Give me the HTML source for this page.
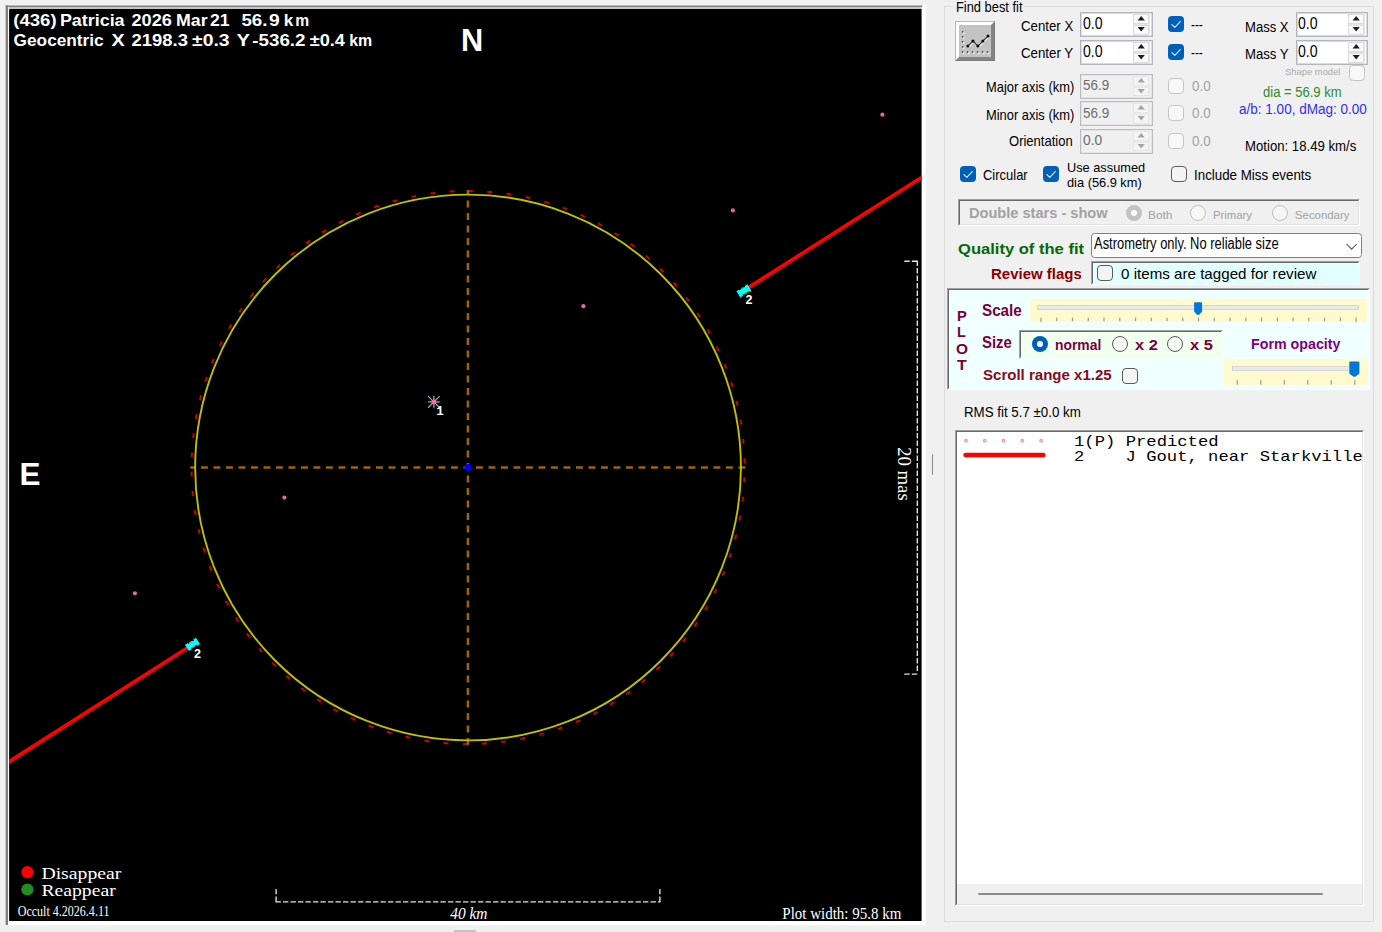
<!DOCTYPE html>
<html lang="en"><head><meta charset="utf-8"><title>Occult - Asteroid occultation plot</title>
<style>
html,body{margin:0;padding:0}
body{width:1382px;height:932px;overflow:hidden;background:#f0f0f0;position:relative;font-family:"Liberation Sans",Arial,sans-serif}
.a{position:absolute;box-sizing:border-box}
.t{position:absolute;white-space:nowrap;transform-origin:0 50%}
#plot{position:absolute;left:9px;top:9px;width:913px;height:912px;display:block}
.sunk{border:1px solid;border-color:#a0a0a0 #fff #fff #a0a0a0}
.sunk>i{position:absolute;left:0;top:0;right:0;bottom:0;border:1px solid;border-color:#696969 #e3e3e3 #e3e3e3 #696969}
.nud{background:#fff;border:1px solid #b3b6bd;box-shadow:inset 0 0 0 1px #d9dbe0}
.nud.dis{background:#f0f0f0;border-color:#b9bcc2;box-shadow:inset 0 0 0 1px #e3e4e6}
.nud .sp{position:absolute;right:2px;top:0;bottom:2px;width:17px;background:#e6e6e6}
.nud .sp b{position:absolute;left:0;width:16px;background:#f9f9f9;border:1px solid #dcdcdc;box-sizing:border-box}
.nud.dis .sp{background:#eeeeee}
.nud.dis .sp b{background:#f4f4f4;border-color:#e6e6e6}
.cb{border-radius:4px}
.cb.on{background:#005fb8}
.cb.off{background:#f4f4f4;border:1px solid #5c5c5c}
.cb.dis{background:#f8f8f8;border:1px solid #c6c6c6}
.rb{border-radius:50%}
.rb.off{background:#f6f6f6;border:1px solid #5a5a5a}
.rb.dis{background:#f7f7f7;border:1px solid #c0c0c0}
svg{position:absolute;overflow:visible}
</style></head><body>

<svg class="a" style="left:0;top:0" width="932" height="932" viewBox="0 0 932 932">
<rect x="5" y="5" width="920.5" height="920.1" fill="#fff"/>
<rect x="5" y="5" width="917.4" height="1" fill="#b9b9b9"/>
<rect x="5" y="6" width="917.4" height="1" fill="#808080"/>
<rect x="5" y="7" width="916.6" height="2" fill="#c4c4c4"/>
<rect x="5" y="5" width="1" height="920" fill="#c6c6c6"/>
<rect x="6" y="5.5" width="2" height="919.5" fill="#7e7e7e"/>
<rect x="8" y="7.6" width="1.2" height="917" fill="#fbfbfb"/>
<rect x="9.1" y="9" width="912.5" height="912" fill="#000"/>
<defs><clipPath id="pc"><rect x="9.1" y="9" width="912.5" height="912"/></clipPath></defs>
<g clip-path="url(#pc)">
<circle cx="468.05" cy="467.5" r="276.5" fill="none" stroke="#cc0000" stroke-width="2" stroke-dasharray="4.9 14.4033" stroke-dashoffset="0" transform="rotate(-90 468.05 467.5)"/>
<line x1="190.2" y1="467.4" x2="745.5" y2="467.4" stroke="#9c6604" stroke-width="2.5" stroke-dasharray="6.9 5.6" stroke-dashoffset="1.7"/>
<line x1="467.9" y1="190" x2="467.9" y2="744.8" stroke="#9c6604" stroke-width="2.5" stroke-dasharray="6.9 5.6" stroke-dashoffset="2"/>
<circle cx="468.05" cy="467.5" r="272.9" fill="none" stroke="#bebe00" stroke-width="1.9"/>
<circle cx="467.95" cy="467.5" r="3.6" fill="#0000ff"/>
<circle cx="882.40" cy="114.70" r="2.1" fill="#e862b0"/>
<circle cx="732.90" cy="210.43" r="2.1" fill="#e862b0"/>
<circle cx="583.40" cy="306.16" r="2.1" fill="#e862b0"/>
<line x1="428.10" y1="401.89" x2="439.70" y2="401.89" stroke="#a4a4b0" stroke-width="1.3"/>
<line x1="428.10" y1="396.09" x2="439.70" y2="407.69" stroke="#a4a4b0" stroke-width="1.3"/>
<line x1="433.90" y1="396.09" x2="433.90" y2="407.69" stroke="#a4a4b0" stroke-width="1.3"/>
<line x1="439.70" y1="396.09" x2="428.10" y2="407.69" stroke="#a4a4b0" stroke-width="1.3"/>
<circle cx="433.90" cy="401.89" r="2.35" fill="#ff69b4"/>
<circle cx="284.40" cy="497.62" r="2.1" fill="#e862b0"/>
<circle cx="134.90" cy="593.35" r="2.1" fill="#e862b0"/>
<line x1="748" y1="287.9" x2="924" y2="175.85" stroke="#ff0000" stroke-width="3.7"/>
<line x1="6" y1="763.7" x2="188.1" y2="647.5" stroke="#ff0000" stroke-width="3.7"/>
<circle cx="743.90" cy="290.80" r="3.7" fill="#00c000"/>
<line x1="739.77" y1="293.43" x2="748.03" y2="288.17" stroke="#00ffff" stroke-width="4.9"/>
<line x1="737.78" y1="290.31" x2="741.75" y2="296.55" stroke="#00ffff" stroke-width="3.2"/>
<line x1="746.05" y1="285.05" x2="750.02" y2="291.29" stroke="#00ffff" stroke-width="3.2"/>
<circle cx="192.45" cy="644.35" r="3.7" fill="#e05a3c"/>
<line x1="188.32" y1="646.98" x2="196.58" y2="641.72" stroke="#00ffff" stroke-width="4.9"/>
<line x1="186.33" y1="643.86" x2="190.30" y2="650.10" stroke="#00ffff" stroke-width="3.2"/>
<line x1="194.60" y1="638.60" x2="198.57" y2="644.84" stroke="#00ffff" stroke-width="3.2"/>
<line x1="276.1" y1="888.9" x2="276.1" y2="902.5" stroke="#e4e4e4" stroke-width="1.35" stroke-dasharray="5.4 2.1"/>
<line x1="659.9" y1="888.9" x2="659.9" y2="902.5" stroke="#e4e4e4" stroke-width="1.35" stroke-dasharray="5.4 2.1"/>
<line x1="275.5" y1="901.9" x2="660.5" y2="901.9" stroke="#e4e4e4" stroke-width="1.35" stroke-dasharray="5.4 2.1"/>
<line x1="904.3" y1="261.2" x2="917.9" y2="261.2" stroke="#e4e4e4" stroke-width="1.35" stroke-dasharray="5.4 2.1"/>
<line x1="917.3" y1="260.6" x2="917.3" y2="672" stroke="#e4e4e4" stroke-width="1.35" stroke-dasharray="5.4 2.1"/>
<line x1="904.3" y1="674.1" x2="918" y2="674.1" stroke="#e4e4e4" stroke-width="1.35" stroke-dasharray="5.4 2.1"/>
<circle cx="27.4" cy="872.1" r="6.1" fill="#ff0000"/>
<circle cx="27.4" cy="889.5" r="6.1" fill="#228b22"/>
</g>
<text x="13.3" y="26" font-family="Liberation Sans, Arial, sans-serif" font-size="16.3" fill="#fff" font-weight="bold" textLength="43.3" lengthAdjust="spacingAndGlyphs" >(436)</text>
<text x="59.9" y="26" font-family="Liberation Sans, Arial, sans-serif" font-size="16.3" fill="#fff" font-weight="bold" textLength="64.7" lengthAdjust="spacingAndGlyphs" >Patricia</text>
<text x="131.5" y="26" font-family="Liberation Sans, Arial, sans-serif" font-size="16.3" fill="#fff" font-weight="bold" textLength="40.4" lengthAdjust="spacingAndGlyphs" >2026</text>
<text x="176.0" y="26" font-family="Liberation Sans, Arial, sans-serif" font-size="16.3" fill="#fff" font-weight="bold" textLength="31.6" lengthAdjust="spacingAndGlyphs" >Mar</text>
<text x="210.0" y="26" font-family="Liberation Sans, Arial, sans-serif" font-size="16.3" fill="#fff" font-weight="bold" textLength="19.6" lengthAdjust="spacingAndGlyphs" >21</text>
<text x="241.4" y="26" font-family="Liberation Sans, Arial, sans-serif" font-size="16.3" fill="#fff" font-weight="bold" textLength="26.0" lengthAdjust="spacingAndGlyphs" >56.</text>
<text x="269.09999999999997" y="26" font-family="Liberation Sans, Arial, sans-serif" font-size="16.3" fill="#fff" font-weight="bold" textLength="10.7" lengthAdjust="spacingAndGlyphs" >9</text>
<text x="283.79999999999995" y="26" font-family="Liberation Sans, Arial, sans-serif" font-size="16.3" fill="#fff" font-weight="bold" textLength="9.6" lengthAdjust="spacingAndGlyphs" >k</text>
<text x="295.2" y="26" font-family="Liberation Sans, Arial, sans-serif" font-size="16.3" fill="#fff" font-weight="bold" textLength="13.9" lengthAdjust="spacingAndGlyphs" >m</text>
<text x="13.6" y="45.5" font-family="Liberation Sans, Arial, sans-serif" font-size="16.3" fill="#fff" font-weight="bold" textLength="90.1" lengthAdjust="spacingAndGlyphs" >Geocentric</text>
<text x="111.5" y="45.5" font-family="Liberation Sans, Arial, sans-serif" font-size="16.3" fill="#fff" font-weight="bold" textLength="13.2" lengthAdjust="spacingAndGlyphs" >X</text>
<text x="131.5" y="45.5" font-family="Liberation Sans, Arial, sans-serif" font-size="16.3" fill="#fff" font-weight="bold" textLength="56.4" lengthAdjust="spacingAndGlyphs" >2198.3</text>
<text x="192.1" y="45.5" font-family="Liberation Sans, Arial, sans-serif" font-size="16.3" fill="#fff" font-weight="bold" textLength="37.5" lengthAdjust="spacingAndGlyphs" >±0.3</text>
<text x="236.6" y="45.5" font-family="Liberation Sans, Arial, sans-serif" font-size="16.3" fill="#fff" font-weight="bold" textLength="13.5" lengthAdjust="spacingAndGlyphs" >Y</text>
<text x="252.3" y="45.5" font-family="Liberation Sans, Arial, sans-serif" font-size="16.3" fill="#fff" font-weight="bold" textLength="53.2" lengthAdjust="spacingAndGlyphs" >-536.2</text>
<text x="309.7" y="45.5" font-family="Liberation Sans, Arial, sans-serif" font-size="16.3" fill="#fff" font-weight="bold" textLength="35.3" lengthAdjust="spacingAndGlyphs" >±0.4</text>
<text x="349.2" y="45.5" font-family="Liberation Sans, Arial, sans-serif" font-size="16.3" fill="#fff" font-weight="bold" textLength="23.0" lengthAdjust="spacingAndGlyphs" >km</text>
<text x="461" y="51" font-family="Liberation Sans, Arial, sans-serif" font-size="30.5" fill="#fff" font-weight="bold" textLength="22.2" lengthAdjust="spacingAndGlyphs" >N</text>
<text x="19.4" y="485.2" font-family="Liberation Sans, Arial, sans-serif" font-size="30.6" fill="#fff" font-weight="bold" textLength="21" lengthAdjust="spacingAndGlyphs" >E</text>
<text x="436.3" y="415" font-family="Liberation Mono, Courier New, monospace" font-size="12.5" fill="#fff" font-weight="bold" >1</text>
<text x="745.5" y="303.9" font-family="Liberation Sans, Arial, sans-serif" font-size="12.5" fill="#fff" font-weight="bold" >2</text>
<text x="193.9" y="657.9" font-family="Liberation Sans, Arial, sans-serif" font-size="12.5" fill="#fff" font-weight="bold" >2</text>
<text x="41.4" y="878.8" font-family="Liberation Serif, Times New Roman, serif" font-size="17.3" fill="#fff" textLength="80" lengthAdjust="spacingAndGlyphs" >Disappear</text>
<text x="41.4" y="895.8" font-family="Liberation Serif, Times New Roman, serif" font-size="17.3" fill="#fff" textLength="74.3" lengthAdjust="spacingAndGlyphs" >Reappear</text>
<text x="17.7" y="916.3" font-family="Liberation Serif, Times New Roman, serif" font-size="13.7" fill="#fff" textLength="91.8" lengthAdjust="spacingAndGlyphs" >Occult 4.2026.4.11</text>
<text x="450.2" y="918.7" font-family="Liberation Serif, Times New Roman, serif" font-size="17" fill="#fff" font-style="italic" textLength="37.3" lengthAdjust="spacingAndGlyphs" >40 km</text>
<text x="782.3" y="918.7" font-family="Liberation Serif, Times New Roman, serif" font-size="17.2" fill="#fff" textLength="119" lengthAdjust="spacingAndGlyphs" >Plot width: 95.8 km</text>
<text x="447.2" y="-897.6" font-family="Liberation Serif, Times New Roman, serif" font-size="18.2" fill="#fff" textLength="53.5" lengthAdjust="spacingAndGlyphs" transform="rotate(90)">20 mas</text>
</svg>
<div class="a" style="left:931.5px;top:453.7px;width:1.6px;height:21.2px;background:#8a8a8a;border-radius:1px"></div>
<div class="a" style="left:454px;top:930px;width:22px;height:2px;background:#c3c3c3"></div>
<div class="a " style="left:944px;top:6px;width:430px;height:916px;border:1px solid #dcdcdc;"></div>
<div class="a " style="left:953px;top:0px;width:71px;height:14px;background:#f0f0f0;"></div>
<div class="a" style="left:955px;top:21px;width:40px;height:40px;background:#c3c3c3;border:1px solid;border-color:#b8b8b8 #7d7d7d #7d7d7d #b8b8b8"><div class="a" style="left:0;top:0;width:38px;height:38px;border-style:solid;border-width:3px 3px 3px 3px;border-color:#fff #848484 #848484 #fff"></div><svg style="left:0;top:0" width="40" height="40" viewBox="0 0 40 40"><rect x="6.9" y="10.3" width="1.5" height="1.5" fill="#fff"/><rect x="5.9" y="9.2" width="1.4" height="1.4" fill="#333"/><rect x="6.9" y="15.2" width="1.5" height="1.5" fill="#fff"/><rect x="5.9" y="14.1" width="1.4" height="1.4" fill="#333"/><rect x="6.9" y="20.2" width="1.5" height="1.5" fill="#fff"/><rect x="5.9" y="19.1" width="1.4" height="1.4" fill="#333"/><rect x="6.9" y="25.3" width="1.5" height="1.5" fill="#fff"/><rect x="5.9" y="24.2" width="1.4" height="1.4" fill="#333"/><rect x="6.9" y="30.4" width="1.5" height="1.5" fill="#fff"/><rect x="5.9" y="29.3" width="1.4" height="1.4" fill="#333"/><rect x="11.9" y="30.4" width="1.5" height="1.5" fill="#fff"/><rect x="10.8" y="29.3" width="1.4" height="1.4" fill="#333"/><rect x="16.9" y="30.4" width="1.5" height="1.5" fill="#fff"/><rect x="15.8" y="29.3" width="1.4" height="1.4" fill="#333"/><rect x="22.0" y="30.4" width="1.5" height="1.5" fill="#fff"/><rect x="20.9" y="29.3" width="1.4" height="1.4" fill="#333"/><rect x="27.0" y="30.4" width="1.5" height="1.5" fill="#fff"/><rect x="25.9" y="29.3" width="1.4" height="1.4" fill="#333"/><rect x="31.9" y="30.4" width="1.5" height="1.5" fill="#fff"/><rect x="30.8" y="29.3" width="1.4" height="1.4" fill="#333"/><polyline points="12.4,25.1 17.5,20.1 22.4,25.1 27.4,20.1 32.5,15.1" fill="none" stroke="#fff" stroke-width="1.3"/><polyline points="11.9,24.1 17,19.1 21.9,24.1 26.9,19.1 32,14.1" fill="none" stroke="#333" stroke-width="1.3"/><circle cx="11.9" cy="24.1" r="1.5" fill="#000"/><circle cx="17.0" cy="19.1" r="1.5" fill="#000"/><circle cx="21.9" cy="24.1" r="1.5" fill="#000"/><circle cx="26.9" cy="19.1" r="1.5" fill="#000"/><circle cx="32.0" cy="14.1" r="1.5" fill="#000"/></svg></div>
<div class="a nud" style="left:1080px;top:12.3px;width:72.5px;height:25px;"><div class="sp"><b style="top:1px;height:10px"></b><b style="top:12px;height:9.5px"></b></div><svg style="left:55.5px;top:2.2px" width="10" height="18" viewBox="0 0 10 18"><path d="M0.6 5.4L4.2 1 7.8 5.4Z" fill="#1c1c1c"/><path d="M0.6 12L4.2 16.4 7.8 12Z" fill="#1c1c1c"/></svg></div>
<div class="a nud" style="left:1080px;top:40px;width:72.5px;height:25px;"><div class="sp"><b style="top:1px;height:10px"></b><b style="top:12px;height:9.5px"></b></div><svg style="left:55.5px;top:2.2px" width="10" height="18" viewBox="0 0 10 18"><path d="M0.6 5.4L4.2 1 7.8 5.4Z" fill="#1c1c1c"/><path d="M0.6 12L4.2 16.4 7.8 12Z" fill="#1c1c1c"/></svg></div>
<div class="a nud" style="left:1295.6px;top:12.3px;width:72.5px;height:25px;"><div class="sp"><b style="top:1px;height:10px"></b><b style="top:12px;height:9.5px"></b></div><svg style="left:55.5px;top:2.2px" width="10" height="18" viewBox="0 0 10 18"><path d="M0.6 5.4L4.2 1 7.8 5.4Z" fill="#1c1c1c"/><path d="M0.6 12L4.2 16.4 7.8 12Z" fill="#1c1c1c"/></svg></div>
<div class="a nud" style="left:1295.6px;top:40px;width:72.5px;height:25px;"><div class="sp"><b style="top:1px;height:10px"></b><b style="top:12px;height:9.5px"></b></div><svg style="left:55.5px;top:2.2px" width="10" height="18" viewBox="0 0 10 18"><path d="M0.6 5.4L4.2 1 7.8 5.4Z" fill="#1c1c1c"/><path d="M0.6 12L4.2 16.4 7.8 12Z" fill="#1c1c1c"/></svg></div>
<div class="a nud dis" style="left:1080px;top:73.8px;width:72.5px;height:25px;"><div class="sp"><b style="top:1px;height:10px"></b><b style="top:12px;height:9.5px"></b></div><svg style="left:55.5px;top:2.2px" width="10" height="18" viewBox="0 0 10 18"><path d="M0.6 5.4L4.2 1 7.8 5.4Z" fill="#a3a3a3"/><path d="M0.6 12L4.2 16.4 7.8 12Z" fill="#a3a3a3"/></svg></div>
<div class="a nud dis" style="left:1080px;top:101.3px;width:72.5px;height:25px;"><div class="sp"><b style="top:1px;height:10px"></b><b style="top:12px;height:9.5px"></b></div><svg style="left:55.5px;top:2.2px" width="10" height="18" viewBox="0 0 10 18"><path d="M0.6 5.4L4.2 1 7.8 5.4Z" fill="#a3a3a3"/><path d="M0.6 12L4.2 16.4 7.8 12Z" fill="#a3a3a3"/></svg></div>
<div class="a nud dis" style="left:1080px;top:128.5px;width:72.5px;height:25px;"><div class="sp"><b style="top:1px;height:10px"></b><b style="top:12px;height:9.5px"></b></div><svg style="left:55.5px;top:2.2px" width="10" height="18" viewBox="0 0 10 18"><path d="M0.6 5.4L4.2 1 7.8 5.4Z" fill="#a3a3a3"/><path d="M0.6 12L4.2 16.4 7.8 12Z" fill="#a3a3a3"/></svg></div>
<div class="a cb on" style="left:1168px;top:16.3px;width:16px;height:16px;"><svg style="left:0;top:0" width="16" height="16" viewBox="0 0 16 16"><path d="M3.9 8.6L6.8 11.4 12.3 5.6" fill="none" stroke="#fff" stroke-opacity="0.88" stroke-width="1.15" stroke-linecap="round" stroke-linejoin="round"/></svg></div>
<div class="a cb on" style="left:1168px;top:43.7px;width:16px;height:16px;"><svg style="left:0;top:0" width="16" height="16" viewBox="0 0 16 16"><path d="M3.9 8.6L6.8 11.4 12.3 5.6" fill="none" stroke="#fff" stroke-opacity="0.88" stroke-width="1.15" stroke-linecap="round" stroke-linejoin="round"/></svg></div>
<div class="a cb dis" style="left:1168px;top:77.7px;width:16px;height:16px;"></div>
<div class="a cb dis" style="left:1168px;top:105px;width:16px;height:16px;"></div>
<div class="a cb dis" style="left:1168px;top:132.5px;width:16px;height:16px;"></div>
<div class="a cb dis" style="left:1348.8px;top:65px;width:16px;height:16px;"></div>
<div class="a cb on" style="left:960.2px;top:166.3px;width:16px;height:16px;"><svg style="left:0;top:0" width="16" height="16" viewBox="0 0 16 16"><path d="M3.9 8.6L6.8 11.4 12.3 5.6" fill="none" stroke="#fff" stroke-opacity="0.88" stroke-width="1.15" stroke-linecap="round" stroke-linejoin="round"/></svg></div>
<div class="a cb on" style="left:1043px;top:166.3px;width:16px;height:16px;"><svg style="left:0;top:0" width="16" height="16" viewBox="0 0 16 16"><path d="M3.9 8.6L6.8 11.4 12.3 5.6" fill="none" stroke="#fff" stroke-opacity="0.88" stroke-width="1.15" stroke-linecap="round" stroke-linejoin="round"/></svg></div>
<div class="a cb off" style="left:1170.5px;top:166.3px;width:16px;height:16px;"></div>
<div class="a sunk" style="left:958px;top:199px;width:402px;height:27px;"><i></i></div>
<div class="a rb" style="left:1125.6px;top:205.3px;width:16px;height:16px;background:#c3c3c3;"><div class="a" style="left:5px;top:5px;width:6px;height:6px;border-radius:50%;background:#fff"></div></div>
<div class="a rb dis" style="left:1190.3px;top:205.3px;width:16px;height:16px;"></div>
<div class="a rb dis" style="left:1271.6px;top:205.3px;width:16px;height:16px;"></div>
<div class="a " style="left:1090.5px;top:233px;width:271px;height:25.3px;background:#fff;border:1px solid #7f7f7f;border-radius:3.5px;"><svg style="left:253px;top:8px" width="14" height="10" viewBox="0 0 14 10"><path d="M1.5 2L6.6 7.2 11.7 2" fill="none" stroke="#505050" stroke-width="1.05"/></svg></div>
<div class="a sunk" style="left:1091px;top:260.5px;width:269px;height:24px;background:#e0ffff;border-color:#a0a0a0 #f4ffff #f4ffff #a0a0a0"><i style="border-color:#696969 #e0ffff #e0ffff #696969"></i></div>
<div class="a cb off" style="left:1096.5px;top:264.8px;width:16px;height:16px;"></div>
<div class="a sunk" style="left:947px;top:288px;width:423px;height:102px;background:#f0ffff;"><i style="border-color:#696969 #f0ffff #f0ffff #696969"></i></div>
<div class="a " style="left:1030.3px;top:299px;width:336.7px;height:23.3px;background:#fffacd;"></div>
<div class="a " style="left:1037px;top:305px;width:322px;height:5.3px;background:#e7eaea;border:1px solid #d6d6d6;"></div>
<div class="a sunk" style="left:1019px;top:330px;width:204px;height:28.6px;background:#f0fff0;border-color:#a0a0a0 #f8fff8 #f8fff8 #a0a0a0"><i style="border-color:#696969 #f0fff0 #f0fff0 #696969"></i></div>
<div class="a rb" style="left:1031.9px;top:336.3px;width:16px;height:16px;background:#005fb8;"><div class="a" style="left:4.8px;top:4.8px;width:6.4px;height:6.4px;border-radius:50%;background:#fff"></div></div>
<div class="a rb off" style="left:1111.6px;top:336.3px;width:16px;height:16px;"></div>
<div class="a rb off" style="left:1166.8px;top:336.3px;width:16px;height:16px;"></div>
<div class="a cb off" style="left:1122px;top:367.5px;width:16px;height:16px;"></div>
<div class="a " style="left:1224.4px;top:358.9px;width:143.5px;height:26px;background:#fffacd;"></div>
<div class="a " style="left:1232px;top:366.3px;width:127.3px;height:5px;background:#e7eaea;border:1px solid #d6d6d6;"></div>
<svg class="a" style="left:0;top:0" width="1382" height="400" viewBox="0 0 1382 400"><rect x="1040.40" y="317.6" width="1.2" height="4.6" fill="#9a9a9a"/><rect x="1056.16" y="317.6" width="1.2" height="3.6" fill="#9a9a9a"/><rect x="1071.91" y="317.6" width="1.2" height="3.6" fill="#9a9a9a"/><rect x="1087.67" y="317.6" width="1.2" height="3.6" fill="#9a9a9a"/><rect x="1103.42" y="317.6" width="1.2" height="3.6" fill="#9a9a9a"/><rect x="1119.18" y="317.6" width="1.2" height="3.6" fill="#9a9a9a"/><rect x="1134.93" y="317.6" width="1.2" height="3.6" fill="#9a9a9a"/><rect x="1150.69" y="317.6" width="1.2" height="3.6" fill="#9a9a9a"/><rect x="1166.44" y="317.6" width="1.2" height="3.6" fill="#9a9a9a"/><rect x="1182.20" y="317.6" width="1.2" height="3.6" fill="#9a9a9a"/><rect x="1197.95" y="317.6" width="1.2" height="3.6" fill="#9a9a9a"/><rect x="1213.71" y="317.6" width="1.2" height="3.6" fill="#9a9a9a"/><rect x="1229.46" y="317.6" width="1.2" height="3.6" fill="#9a9a9a"/><rect x="1245.22" y="317.6" width="1.2" height="3.6" fill="#9a9a9a"/><rect x="1260.97" y="317.6" width="1.2" height="3.6" fill="#9a9a9a"/><rect x="1276.73" y="317.6" width="1.2" height="3.6" fill="#9a9a9a"/><rect x="1292.48" y="317.6" width="1.2" height="3.6" fill="#9a9a9a"/><rect x="1308.24" y="317.6" width="1.2" height="3.6" fill="#9a9a9a"/><rect x="1323.99" y="317.6" width="1.2" height="3.6" fill="#9a9a9a"/><rect x="1339.75" y="317.6" width="1.2" height="3.6" fill="#9a9a9a"/><rect x="1355.50" y="317.6" width="1.2" height="4.6" fill="#9a9a9a"/><path d="M1194.1 303.2Q1194.1 302.3 1195 302.3H1201.2Q1202.1 302.3 1202.1 303.2V310.9Q1202.1 311.9 1201.3 312.6L1199 314.7Q1198.1 315.3 1197.2 314.7L1194.9 312.6Q1194.1 311.9 1194.1 310.9Z" fill="#0078d7"/><rect x="1236.70" y="380.2" width="1.2" height="4.4" fill="#9a9a9a"/><rect x="1260.20" y="380.2" width="1.2" height="4.4" fill="#9a9a9a"/><rect x="1283.70" y="380.2" width="1.2" height="4.4" fill="#9a9a9a"/><rect x="1307.20" y="380.2" width="1.2" height="4.4" fill="#9a9a9a"/><rect x="1330.70" y="380.2" width="1.2" height="4.4" fill="#9a9a9a"/><rect x="1354.20" y="380.2" width="1.2" height="4.4" fill="#9a9a9a"/><path d="M1349.3 362.4Q1349.3 361.4 1350.3 361.4H1358.4Q1359.4 361.4 1359.4 362.4V372.4Q1359.4 373.7 1358.3 374.6L1355.6 376.5Q1354.35 377.2 1353.1 376.5L1350.4 374.6Q1349.3 373.7 1349.3 372.4Z" fill="#0078d7"/></svg>
<div class="a sunk" style="left:955px;top:429.5px;width:409px;height:476.5px;background:#fff;"><i></i><div class="a" style="left:1px;right:1px;bottom:1px;height:20px;background:#f0f0f0"></div><div class="a" style="left:22px;bottom:10px;width:345px;height:2.2px;background:#8b8b8b;border-radius:1px"></div></div>
<svg class="a" style="left:0;top:430px" width="1382" height="40" viewBox="0 430 1382 40"><circle cx="966" cy="440.7" r="1.9" fill="#ff8ac6"/><circle cx="966" cy="440.7" r="0.7" fill="#ffd0e8"/><circle cx="984.8" cy="440.7" r="1.9" fill="#ff8ac6"/><circle cx="984.8" cy="440.7" r="0.7" fill="#ffd0e8"/><circle cx="1003.5" cy="440.7" r="1.9" fill="#ff8ac6"/><circle cx="1003.5" cy="440.7" r="0.7" fill="#ffd0e8"/><circle cx="1022.3" cy="440.7" r="1.9" fill="#ff8ac6"/><circle cx="1022.3" cy="440.7" r="0.7" fill="#ffd0e8"/><circle cx="1041.1" cy="440.7" r="1.9" fill="#ff8ac6"/><circle cx="1041.1" cy="440.7" r="0.7" fill="#ffd0e8"/><line x1="965.5" y1="455" x2="1043.3" y2="455" stroke="#ff0000" stroke-width="4.5" stroke-linecap="round"/></svg>
<span class="t" style="left:955.70px;top:0.15px;font-size:14px;line-height:14px;color:#000;transform:scaleX(0.9188);">Find best fit</span>
<span class="t" style="left:1021.20px;top:18.80px;font-size:14.3px;line-height:14.3px;color:#000;transform:scaleX(0.9252);">Center X</span>
<span class="t" style="left:1021.20px;top:46.20px;font-size:14.3px;line-height:14.3px;color:#000;transform:scaleX(0.9293);">Center Y</span>
<span class="t" style="left:985.70px;top:80.40px;font-size:14.3px;line-height:14.3px;color:#000;transform:scaleX(0.9027);">Major axis (km)</span>
<span class="t" style="left:985.70px;top:108.10px;font-size:14.3px;line-height:14.3px;color:#000;transform:scaleX(0.9027);">Minor axis (km)</span>
<span class="t" style="left:1008.80px;top:134.30px;font-size:14.3px;line-height:14.3px;color:#000;transform:scaleX(0.9108);">Orientation</span>
<span class="t" style="left:1191.20px;top:18.15px;font-size:14px;line-height:14px;color:#000;transform:scaleX(0.8429);">---</span>
<span class="t" style="left:1191.20px;top:45.55px;font-size:14px;line-height:14px;color:#000;transform:scaleX(0.8429);">---</span>
<span class="t" style="left:1244.80px;top:19.75px;font-size:14px;line-height:14px;color:#000;transform:scaleX(0.9339);">Mass X</span>
<span class="t" style="left:1244.80px;top:47.15px;font-size:14px;line-height:14px;color:#000;transform:scaleX(0.9389);">Mass Y</span>
<span class="t" style="left:1082.60px;top:15.00px;font-size:16.3px;line-height:16.3px;color:#000;transform:scaleX(0.8657);">0.0</span>
<span class="t" style="left:1082.60px;top:42.60px;font-size:16.3px;line-height:16.3px;color:#000;transform:scaleX(0.8657);">0.0</span>
<span class="t" style="left:1297.60px;top:15.00px;font-size:16.3px;line-height:16.3px;color:#000;transform:scaleX(0.8657);">0.0</span>
<span class="t" style="left:1297.60px;top:42.60px;font-size:16.3px;line-height:16.3px;color:#000;transform:scaleX(0.8657);">0.0</span>
<span class="t" style="left:1082.60px;top:77.25px;font-size:15.3px;line-height:15.3px;color:#6d6d6d;transform:scaleX(0.8797);">56.9</span>
<span class="t" style="left:1082.60px;top:104.75px;font-size:15.3px;line-height:15.3px;color:#6d6d6d;transform:scaleX(0.8797);">56.9</span>
<span class="t" style="left:1082.60px;top:132.15px;font-size:15.3px;line-height:15.3px;color:#6d6d6d;transform:scaleX(0.9029);">0.0</span>
<span class="t" style="left:1191.70px;top:78.94px;font-size:14.6px;line-height:14.6px;color:#a2a2a2;transform:scaleX(0.9164);">0.0</span>
<span class="t" style="left:1191.70px;top:106.44px;font-size:14.6px;line-height:14.6px;color:#a2a2a2;transform:scaleX(0.9164);">0.0</span>
<span class="t" style="left:1191.70px;top:133.84px;font-size:14.6px;line-height:14.6px;color:#a2a2a2;transform:scaleX(0.9164);">0.0</span>
<span class="t" style="left:1285.40px;top:67.00px;font-size:9.8px;line-height:9.8px;color:#ababab;transform:scaleX(0.9596);">Shape model</span>
<span class="t" style="left:1263.10px;top:84.55px;font-size:14px;line-height:14px;color:#2e8b2e;transform:scaleX(0.9309);">dia = 56.9 km</span>
<span class="t" style="left:1239.30px;top:102.15px;font-size:14px;line-height:14px;color:#3030f0;transform:scaleX(0.9665);">a/b: 1.00, dMag: 0.00</span>
<span class="t" style="left:1244.60px;top:139.35px;font-size:14px;line-height:14px;color:#000;transform:scaleX(0.9410);">Motion: 18.49 km/s</span>
<span class="t" style="left:983.40px;top:167.74px;font-size:14.6px;line-height:14.6px;color:#000;transform:scaleX(0.8890);">Circular</span>
<span class="t" style="left:1067.00px;top:160.70px;font-size:13px;line-height:13px;color:#000;transform:scaleX(0.9826);">Use assumed</span>
<span class="t" style="left:1067.00px;top:176.30px;font-size:13px;line-height:13px;color:#000;transform:scaleX(0.9845);">dia (56.9 km)</span>
<span class="t" style="left:1194.30px;top:167.57px;font-size:14.8px;line-height:14.8px;color:#000;transform:scaleX(0.9019);">Include Miss events</span>
<span class="t" style="left:968.50px;top:205.10px;font-size:15px;line-height:15px;color:#a2a2a2;font-weight:bold;transform:scaleX(0.9724);">Double stars - show</span>
<span class="t" style="left:1147.70px;top:208.68px;font-size:11.6px;line-height:11.6px;color:#a2a2a2;transform:scaleX(1.0269);">Both</span>
<span class="t" style="left:1213.30px;top:208.68px;font-size:11.6px;line-height:11.6px;color:#a2a2a2;transform:scaleX(0.9765);">Primary</span>
<span class="t" style="left:1294.50px;top:208.68px;font-size:11.6px;line-height:11.6px;color:#a2a2a2;transform:scaleX(0.9813);">Secondary</span>
<span class="t" style="left:958.20px;top:240.98px;font-size:15.5px;line-height:15.5px;color:#056905;font-weight:bold;transform:scaleX(1.0681);">Quality of the fit</span>
<span class="t" style="left:1094.00px;top:236.16px;font-size:16px;line-height:16px;color:#000;transform:scaleX(0.8088);">Astrometry only. No reliable size</span>
<span class="t" style="left:991.00px;top:265.50px;font-size:15px;line-height:15px;color:#8b0000;font-weight:bold;">Review flags</span>
<span class="t" style="left:1121.00px;top:266.00px;font-size:15px;line-height:15px;color:#000;transform:scaleX(1.0101);">0 items are tagged for review</span>
<span class="t" style="left:957.20px;top:308.93px;font-size:14.5px;line-height:14.5px;color:#7a0040;font-weight:bold;transform:scaleX(1.0132);">P</span>
<span class="t" style="left:957.20px;top:325.43px;font-size:14.5px;line-height:14.5px;color:#7a0040;font-weight:bold;transform:scaleX(0.9933);">L</span>
<span class="t" style="left:956.20px;top:342.13px;font-size:14.5px;line-height:14.5px;color:#7a0040;font-weight:bold;transform:scaleX(1.0637);">O</span>
<span class="t" style="left:957.40px;top:357.73px;font-size:14.5px;line-height:14.5px;color:#7a0040;font-weight:bold;transform:scaleX(1.0949);">T</span>
<span class="t" style="left:982.10px;top:302.69px;font-size:15.6px;line-height:15.6px;color:#7a0040;font-weight:bold;transform:scaleX(0.9763);">Scale</span>
<span class="t" style="left:982.10px;top:335.49px;font-size:15.6px;line-height:15.6px;color:#7a0040;font-weight:bold;transform:scaleX(0.9550);">Size</span>
<span class="t" style="left:1054.80px;top:338.08px;font-size:14.2px;line-height:14.2px;color:#7a0040;font-weight:bold;transform:scaleX(0.9786);">normal</span>
<span class="t" style="left:1134.50px;top:338.08px;font-size:14.2px;line-height:14.2px;color:#7a0040;font-weight:bold;transform:scaleX(1.1553);">x 2</span>
<span class="t" style="left:1189.80px;top:338.08px;font-size:14.2px;line-height:14.2px;color:#7a0040;font-weight:bold;transform:scaleX(1.1604);">x 5</span>
<span class="t" style="left:1250.80px;top:336.28px;font-size:15.5px;line-height:15.5px;color:#800080;font-weight:bold;transform:scaleX(0.9196);">Form opacity</span>
<span class="t" style="left:983.40px;top:368.34px;font-size:14.6px;line-height:14.6px;color:#8b0a1c;font-weight:bold;transform:scaleX(1.0301);">Scroll range x1.25</span>
<span class="t" style="left:964.30px;top:404.80px;font-size:14.3px;line-height:14.3px;color:#000;transform:scaleX(0.9311);">RMS fit 5.7 ±0.0 km</span>
<span class="t" style="left:1074.00px;top:435.02px;font-size:14.2px;line-height:14.2px;color:#000;font-family:'Liberation Mono','Courier New',monospace;transform:scaleX(1.2131);clip-path:none;">1(P)&nbsp;Predicted</span>
<span class="t" style="left:1074.00px;top:450.12px;font-size:14.2px;line-height:14.2px;color:#000;font-family:'Liberation Mono','Courier New',monospace;transform:scaleX(1.2115);">2&nbsp;&nbsp;&nbsp;&nbsp;J&nbsp;Gout,&nbsp;near&nbsp;Starkville</span>
</body></html>
